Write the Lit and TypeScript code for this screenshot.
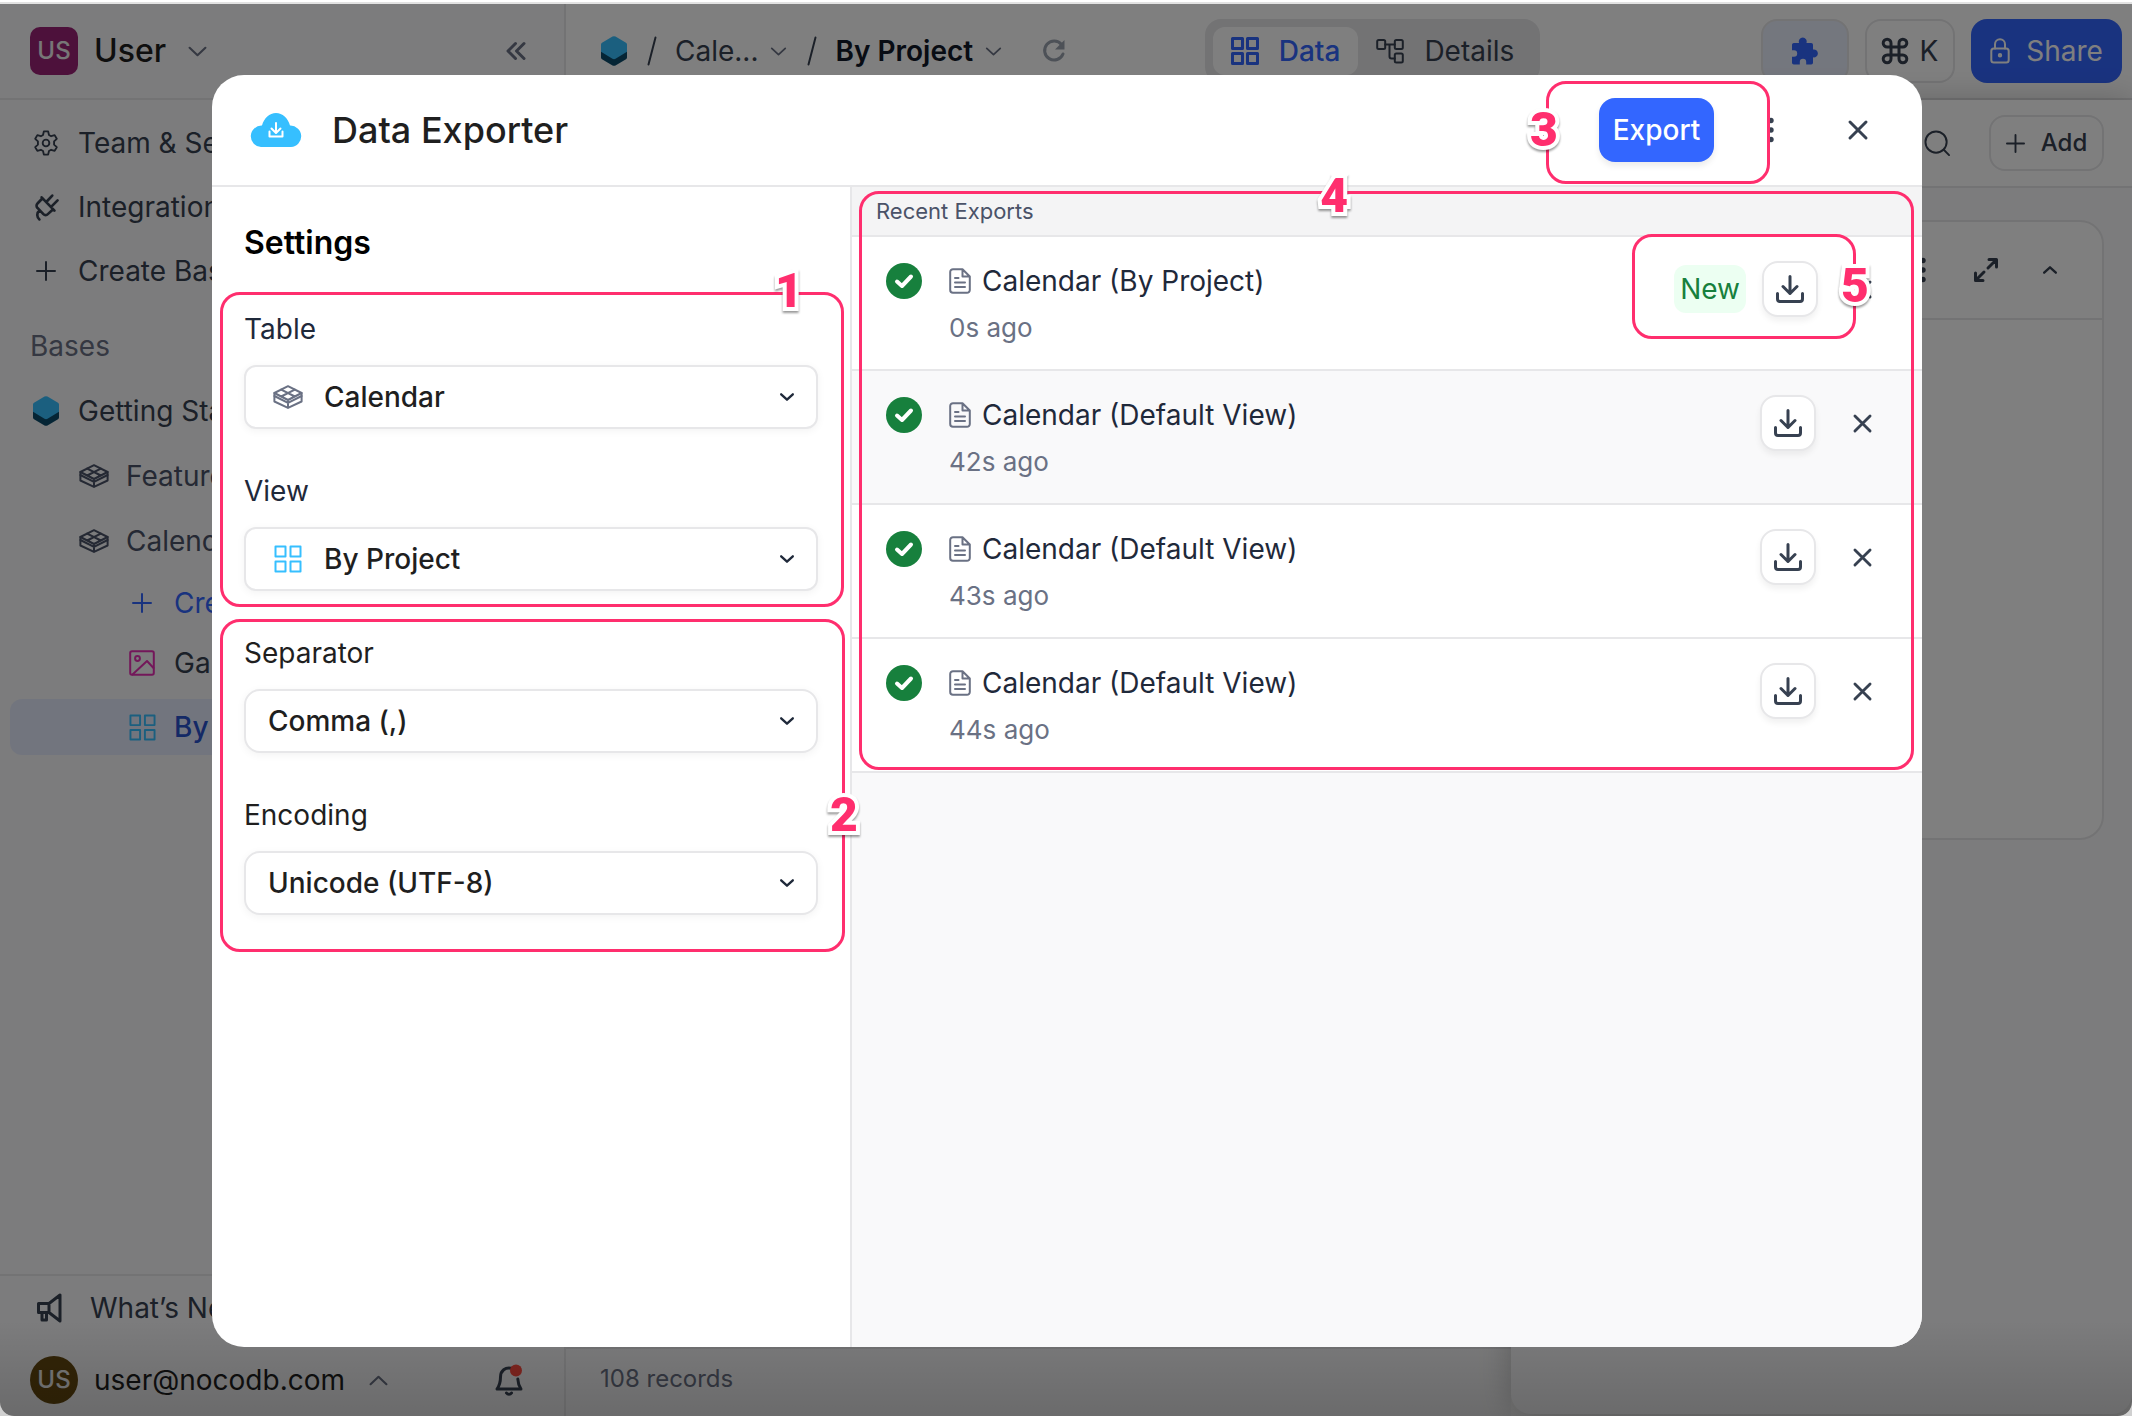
import { LitElement, html, css, svg, nothing, TemplateResult } from "lit";
import { customElement } from "lit/decorators.js";
import { classMap } from "lit/directives/class-map.js";

/* ---------- Icons: each entry is [viewBox width, viewBox height, drawing] ---------- */
const icons: Record<string, [number, number, TemplateResult]> = {
  chevronDown: [18, 10, svg`<path d="M1.5 1.5 9 8.5l7.5-7"/>`],
  chevronUp: [18, 10, svg`<path d="M1.5 8.5 9 1.5l7.5 7"/>`],
  collapse: [20, 18, svg`<path d="M9.5 1.5 2 9l7.5 7.5M18 1.5 10.5 9l7.5 7.5"/>`],
  plus: [20, 20, svg`<path d="M10 1v18M1 10h18"/>`],
  close: [18, 18, svg`<path d="M1 1l16 16M17 1 1 17"/>`],
  slash: [10, 30, svg`<path d="M8.5 1.5 1.5 28.5"/>`],
  search: [28, 28, svg`<circle cx="12.5" cy="12.5" r="11"/><path d="M20.5 20.5 26 26"/>`],
  gear: [28, 28, svg`<circle cx="14" cy="14" r="3.6"/><path d="M11.7 1.5h4.6l.9 3.9 2.3 1.3 3.8-1.2 2.3 4-2.900 2.700v3.600l2.900 2.700-2.300 4-3.800-1.200-2.300 1.300-.9 3.900h-4.600l-.9-3.900-2.300-1.300-3.800 1.200-2.300-4 2.900-2.700v-3.600L2.400 9.500l2.300-4 3.800 1.200 2.300-1.300z"/>`],
  plug: [26, 30, svg`<path d="M7.500 3.500 22 18.500M8.500 4.500 2.800 10.500a3.500 3.500 0 0 0 0 5l6.700 7a3.500 3.500 0 0 0 5 0l6-5.500M13 8.500 19.500 1.500M18.500 14l7-7M5 18.500C1.500 21 2 26 5 28.500"/>`],
  table: [30, 24, svg`<path d="M15 1.200 28.600 8v8.500L15 22.800 1.400 16.500V8z"/><path d="M1.400 8 15 15l13.600-7M8.200 4.600 21.800 11.500M21.800 4.600 8.200 11.500M15 15v7.500M1.400 11 15 17.800 28.600 11"/>`],
  gallery: [26, 26, svg`<rect x="1.2" y="1.2" width="23.6" height="23.6" rx="1.8"/><circle cx="8.5" cy="8.5" r="2.4"/><path d="M3.500 24.500 18 11l6.500 7"/>`],
  grid: [28, 28, svg`<path d="M1.500 1.500h10v10h-10zM16.500 1.500h10v10h-10zM1.500 16.500h10v10h-10zM16.500 16.500h10v10h-10z"/>`],
  details: [28, 26, svg`<rect x="1.2" y="2" width="8" height="9" rx="1.5"/><rect x="18.8" y="2" width="8" height="9" rx="1.5"/><rect x="18.8" y="15.5" width="8" height="9" rx="1.5"/><path d="M9.200 6.500h9.600M13.500 6.500v12a2 2 0 0 0 2 2h3.300"/>`],
  lock: [20, 26, svg`<rect x="1.3" y="10.5" width="17.4" height="14" rx="2.5"/><path d="M5 10.500V6.300a5 5 0 0 1 10 0v4.200"/><circle cx="10" cy="17.3" r="1.2"/>`],
  command: [26, 26, svg`<path d="M9 9V5.200A3.900 3.900 0 1 0 5.200 9h15.600A3.900 3.900 0 1 0 17 5.200v15.600a3.900 3.900 0 1 0 3.800-3.800H5.200A3.900 3.900 0 1 0 9 20.800z"/>`],
  expand: [24, 24, svg`<path d="M15 1.500h7.500V9M22 2l-8 8M9 22.500H1.500V15M2 22l8-8"/>`],
  megaphone: [26, 30, svg`<path d="M24 2v26L13 19.500H2.500v-9H13zM13 10.500v9M6 19.500V27h4.500v-7.500"/>`],
  download: [28, 28, svg`<path d="M14 1.500v17M7 11.500l7 7 7-7M1.500 18.500V24a2.500 2.500 0 0 0 2.500 2.500h20a2.500 2.500 0 0 0 2.500-2.500v-5.500"/>`],
  doc: [22, 26, svg`<path d="M13.500 1.200H4A2.800 2.800 0 0 0 1.200 4v18A2.800 2.800 0 0 0 4 24.800h14a2.800 2.800 0 0 0 2.800-2.800V8.500zM13.500 1.200v7.300h7.300M6 10h3.500M6 14.500h10M6 19h10"/>`],
  bell: [28, 32, svg`<path d="M17.500 4.500C10 2.500 5.500 7 5.500 13c0 6-1 8.500-3.500 12h24c-2-3-3-5.500-3.200-10M11.500 29c1.200 1.800 3.800 1.800 5 0"/><circle cx="21" cy="6.5" r="6" fill="#ff4a3f" stroke="none"/>`],
  reload: [24, 24, svg`<path d="M19.500 5.500A9.500 9.500 0 1 0 21 15"/><path d="M22.500 1v9.500H13z" fill="currentColor" stroke="none"/>`],
  dots: [6, 26, svg`<g fill="currentColor" stroke="none"><circle cx="3" cy="3.5" r="2.7"/><circle cx="3" cy="13" r="2.7"/><circle cx="3" cy="22.5" r="2.7"/></g>`],
  puzzle: [28, 28, svg`<path fill="currentColor" stroke="none" d="M1 7.500A1.800 1.800 0 0 1 2.800 6H8a4 4 0 1 1 7.500 0h4.700A1.800 1.800 0 0 1 22 7.800v4.700a4 4 0 1 1 0 7.800v5.400a1.800 1.800 0 0 1-1.800 1.800h-5V25a3.200 3.200 0 0 0-6.400 0v2.500h-6A1.800 1.800 0 0 1 1 25.700v-6h2a3.200 3.200 0 0 0 0-6.400H1z"/>`],
  hex: [26, 30, svg`<g stroke="none"><path fill="#0b4a6b" d="M0 14 13 8l13 6v7.500a2 2 0 0 1-1 1.700l-10.500 6.200a3 3 0 0 1-3 0L1 23.200a2 2 0 0 1-1-1.700z"/><path fill="#36bfff" d="M1 6.800 11.500.6a3 3 0 0 1 3 0L25 6.800a2 2 0 0 1 1 1.700v7.200l-11.500 7a3 3 0 0 1-3 0L0 15.700V8.500a2 2 0 0 1 1-1.700z"/></g>`],
  cloud: [52, 34, svg`<path fill="#36bfff" stroke="none" d="M11 34A10.700 10.700 0 0 1 12 12.600C14 5 19.500 0 26 0s12 5 14 12.600A10.700 10.700 0 0 1 41 34z"/><path stroke="#fff" stroke-width="2" d="M26 10v9.500M21.500 15.500 26 20l4.500-4.500M19.500 18.500v5h13v-5"/>`],
  check: [36, 36, svg`<circle cx="18" cy="18" r="18" fill="#17803d" stroke="none"/><path stroke="#fff" stroke-width="4" d="M11 18.500l5 4.500 9-9.500"/>`],
};

const icon = (name: string, width = icons[name][0], stroke = 2) => {
  const [w, h, body] = icons[name];
  return html`<svg class="icon" aria-hidden="true" viewBox="0 0 ${w} ${h}" width=${width} height=${Math.round((h * width) / w)}
    fill="none" stroke="currentColor" stroke-width=${stroke} stroke-linecap="round" stroke-linejoin="round">${body}</svg>`;
};

const base = css`
  :host { display: block; box-sizing: border-box; }
  *, *::before, *::after { box-sizing: border-box; }
  button, select { font: inherit; color: inherit; margin: 0; cursor: pointer; }
  button { display: inline-flex; align-items: center; justify-content: center; background: none; border: 0; padding: 0; white-space: nowrap; }
  a { color: inherit; text-decoration: none; }
  h1, h2, h3, p, ul { margin: 0; padding: 0; font-size: inherit; font-weight: inherit; }
  ul { list-style: none; }
  .icon { display: block; flex: none; overflow: visible; }
`;

/* ---------- Numbered call-out frame that lies over a region ---------- */
@customElement("call-out")
class CallOut extends LitElement {
  static properties = { n: { type: Number } };
  declare n: number;
  static styles = [base, css`
    :host { position: absolute; z-index: 5; pointer-events: none; border: 3px solid #ff2e6e; border-radius: 20px; }
    .number {
      position: absolute; width: 40px; text-align: center;
      font: 900 48px/48px Roboto, "Liberation Sans", sans-serif; color: #ff2e6e;
      -webkit-text-stroke: 8px #fff; paint-order: stroke fill; stroke-linejoin: round;
      filter: drop-shadow(0 2px 1px rgba(0, 0, 0, .4));
    }
    .n1 { right: 32px; top: -28px; }
    .n2 { right: -22px; top: 169px; }
    .n3 { left: -25px; top: 22px; }
    .n4 { left: calc(45% - 20px); top: -22px; }
    .n5 { right: -22px; top: 25px; }
  `];
  render() {
    return html`<span class="number n${this.n}">${this.n}</span>`;
  }
}

/* ---------- Left navigation ---------- */
@customElement("app-sidebar")
class AppSidebar extends LitElement {
  static styles = [base, css`
    :host { display: flex; flex-direction: column; background: #f9f9fa; border-right: 2px solid #e7e7e9; color: #374151; }
    .top { display: flex; align-items: center; height: 96px; padding: 0 38px 0 30px; border-bottom: 2px solid #e7e7e9; }
    .avatar { display: grid; place-items: center; width: 48px; height: 48px; border-radius: 10px; background: #9b2276; color: #eee; font-size: 24px; font-weight: 500; }
    .round { border-radius: 50%; background: #65480f; }
    .name { margin: 0 22px 0 16px; font-size: 32px; font-weight: 500; color: #1f1f1f; }
    .push { margin-left: auto; }
    .muted { color: #6a7184; }
    .row { display: flex; align-items: center; gap: 18px; height: 64px; padding-left: 32px; white-space: nowrap; }
    .glyph { display: flex; justify-content: center; width: 28px; }
    .links { padding-top: 11px; }
    .bases { padding: 0 0 0 30px; margin-top: 11px; line-height: 64px; color: #6a7184; }
    .tables { padding-top: 1px; }
    .table { height: 65px; padding-left: 80px; color: #4a5268; }
    .view { padding-left: 128px; height: 60px; }
    .create { color: #3366ff; }
    .pink { color: #e62fb4; }
    .sky { color: #36bfff; }
    .active { margin: 6px 8px 0 10px; padding-left: 118px; height: 56px; border-radius: 12px; background: #e5ebfc; color: #2952cc; font-weight: 500; }
    .bottom { margin-top: auto; border-top: 2px solid #e7e7e9; }
    .news { padding-left: 36px; gap: 28px; height: 64px; }
    .user { display: flex; align-items: center; height: 72px; margin-top: 4px; padding: 0 41px 0 30px; }
    .mail { margin: 0 24px 0 16px; color: #1f1f1f; }
  `];
  render() {
    const row = (cls: string, ic: TemplateResult, label: string) =>
      html`<li><a href="#" class="row ${cls}"><span class="glyph">${ic}</span>${label}</a></li>`;
    return html`
      <div class="top">
        <span class="avatar">US</span><span class="name">User</span>
        <span class="muted">${icon("chevronDown", 19, 2)}</span>
        <button class="push muted" aria-label="Collapse">${icon("collapse", 20, 3)}</button>
      </div>
      <ul class="links">
        ${row("", icon("gear", 26), "Team & Settings")}
        ${row("", icon("plug", 23, 3), "Integrations")}
        ${row("", icon("plus", 20), "Create Base")}
      </ul>
      <h2 class="bases">Bases</h2>
      <ul class="tables">
        ${row("", icon("hex", 26), "Getting Started")}
        ${row("table", icon("table", 30), "Features")}
        ${row("table", icon("table", 30), "Calendar")}
        ${row("view create", icon("plus", 20), "Create View")}
        ${row("view", html`<span class="pink">${icon("gallery", 26)}</span>`, "Gallery")}
        ${row("view active", html`<span class="sky">${icon("grid", 27)}</span>`, "By Project")}
      </ul>
      <div class="bottom">
        <a href="#" class="row news">${icon("megaphone", 26, 3)}What’s New</a>
        <div class="user">
          <span class="avatar round">US</span><span class="mail">user@nocodb.com</span>
          <span class="muted">${icon("chevronUp", 19, 2)}</span>
          <button class="push" aria-label="Notifications">${icon("bell", 28, 3)}</button>
        </div>
      </div>`;
  }
}

/* ---------- Main column behind the dialog ---------- */
@customElement("app-workspace")
class AppWorkspace extends LitElement {
  static styles = [base, css`
    :host { display: flex; flex-direction: column; min-width: 0; background: #fff; color: #374151; }
    .bar { display: flex; align-items: center; height: 96px; padding: 0 10px 0 35px; border-bottom: 2px solid #e7e7e9; }
    .crumbs, .actions { display: flex; align-items: center; flex: 1 1 0; white-space: nowrap; }
    .slash { margin: 0 18px 0 20px; }
    .down { margin-left: 12px; color: #6a7184; }
    .strong { color: #101828; font-weight: 600; }
    .reload { margin-left: 40px; color: #9aa2af; }
    .tabs { display: flex; margin-left: 22px; padding: 8px; border-radius: 16px; background: #e7e7e9; }
    .tab { gap: 20px; height: 48px; padding: 0 18px; border-radius: 12px; }
    .on { background: #fff; color: #3366ff; font-weight: 500; }
    .actions { justify-content: flex-end; gap: 16px; }
    .btn { height: 64px; border: 2px solid #e7e7e9; border-radius: 16px; }
    .ext { width: 88px; background: #e9eefc; color: #3366ff; }
    .keys { width: 90px; gap: 12px; }
    .share { width: 151px; gap: 16px; border: 0; background: #3366ff; color: #fff; }
    .body { display: flex; flex: 1; min-height: 0; }
    .records { flex: 1; display: flex; flex-direction: column; justify-content: flex-end; background: #f9f9fa; }
    .foot { height: 69px; padding: 0 34px; line-height: 60px; border-top: 2px solid #e7e7e9; font-size: 24px; color: #6a7184; }
    .panel { flex: 0 0 621px; margin-bottom: 2px; background: #f9f9fa; border-radius: 0 0 20px 20px; box-shadow: 0 0 32px rgba(0, 0, 0, .22); }
    .tools { display: flex; align-items: center; justify-content: flex-end; gap: 38px; height: 88px; padding-right: 28px; border-bottom: 2px solid #e7e7e9; background: #fff; }
    .add { width: 115px; height: 56px; gap: 16px; font-size: 24px; font-weight: 500; }
    .card { margin: 32px 28px; height: 620px; border: 2px solid #e7e7e9; border-radius: 24px; background: #fff; }
    .cardhead { display: flex; align-items: center; justify-content: flex-end; gap: 48px; height: 98px; padding-right: 45px; border-bottom: 2px solid #e7e7e9; }
    .tail { display: flex; align-items: center; gap: 45px; }
  `];
  render() {
    return html`
      <header class="bar">
        <nav class="crumbs">
          ${icon("hex", 26)}<span class="slash">${icon("slash")}</span>Cale...<span class="down">${icon("chevronDown", 17)}</span>
          <span class="slash">${icon("slash")}</span><span class="strong">By Project</span><span class="down">${icon("chevronDown", 17)}</span>
          <button class="reload" aria-label="Reload">${icon("reload", 24, 3)}</button>
        </nav>
        <div class="tabs">
          <button class="tab on">${icon("grid", 28, 3)}Data</button>
          <button class="tab">${icon("details", 28)}Details</button>
        </div>
        <div class="actions">
          <button class="btn ext" aria-label="Extensions">${icon("puzzle", 28)}</button>
          <button class="btn keys">${icon("command", 26, 3)}K</button>
          <button class="btn share">${icon("lock", 20)}Share</button>
        </div>
      </header>
      <div class="body">
        <section class="records"><footer class="foot">108 records</footer></section>
        <aside class="panel">
          <div class="tools">
            <button aria-label="Search">${icon("search", 27)}</button>
            <button class="btn add">${icon("plus", 19)}Add</button>
          </div>
          <div class="card">
            <div class="cardhead">${icon("dots", 6)}<div class="tail">${icon("expand", 24, 3)}${icon("chevronUp", 14, 3)}</div></div>
          </div>
        </aside>
      </div>`;
  }
}

/* ---------- Export dialog ---------- */
interface Field { id: string; label: string; value: string; glyph?: string; }
interface Job { view: string; age: string; fresh?: boolean; }

@customElement("export-dialog")
class ExportDialog extends LitElement {
  source: Field[] = [
    { id: "table", label: "Table", value: "Calendar", glyph: "table" },
    { id: "view", label: "View", value: "By Project", glyph: "grid" },
  ];
  format: Field[] = [
    { id: "separator", label: "Separator", value: "Comma (,)" },
    { id: "encoding", label: "Encoding", value: "Unicode (UTF-8)" },
  ];
  jobs: Job[] = [
    { view: "By Project", age: "0s ago", fresh: true },
    { view: "Default View", age: "42s ago" },
    { view: "Default View", age: "43s ago" },
    { view: "Default View", age: "44s ago" },
  ];
  static styles = [base, css`
    :host { display: flex; flex-direction: column; overflow: hidden; background: #fff; border-radius: 32px; color: #1f293a; }
    .head { display: flex; align-items: center; height: 112px; padding: 0 40px 0 38px; border-bottom: 2px solid #e7e7e9; }
    .title { flex: 1; margin-left: 30px; font-size: 36px; font-weight: 500; color: #1f1f1f; }
    .exporting { position: relative; margin-right: 54px; }
    .frame3 { inset: -17px -56px -22px -53px; }
    .export { width: 115px; height: 64px; border-radius: 16px; background: #3366ff; color: #fff; font-weight: 500; box-shadow: 0 4px 6px rgba(0, 0, 0, .08); }
    .x { width: 48px; height: 56px; color: #374151; }
    .more { color: #374151; margin-right: 60px; }
    .body { display: flex; flex: 1; min-height: 0; }
    .settings { flex: 0 0 640px; padding: 32px 32px 0; border-right: 2px solid #e7e7e9; display: flex; flex-direction: column; gap: 42px; }
    .heading { font-size: 32px; line-height: 48px; font-weight: 600; color: #000; }
    .group { position: relative; display: flex; flex-direction: column; gap: 42px; }
    .frame1 { inset: -17px -26px -16px -24px; }
    .frame2 { inset: -14px -27px -37px -24px; }
    .field { display: flex; flex-direction: column; gap: 16px; line-height: 40px; }
    .plain { color: #1f1f1f; }
    .box { display: grid; align-items: center; color: #1f1f1f; }
    .box > * { grid-area: 1 / 1; }
    .select { width: 100%; height: 64px; padding: 0 60px 0 22px; appearance: none; border: 2px solid #e7e7e9; border-radius: 16px; background: #fff; font-weight: 500; box-shadow: 0 2px 8px rgba(0, 0, 0, .05); }
    .led { padding-left: 78px; border-radius: 12px; }
    .lead { display: grid; justify-items: center; width: 32px; margin-left: 28px; pointer-events: none; color: #6a7184; }
    .sky { color: #36bfff; }
    .caret { justify-self: end; margin-right: 24px; pointer-events: none; color: #1f293a; }
    .recent { flex: 1; min-width: 0; background: #f9f9fa; }
    .list { position: relative; }
    .frame4 { inset: 4px 8px 3px 7px; }
    .caption { height: 50px; padding-left: 24px; line-height: 48px; font-size: 22px; color: #4a5268; background: #f4f4f5; border-bottom: 2px solid #e7e7e9; }
    .job { display: flex; align-items: flex-start; height: 134px; padding: 24px 32px 0 34px; background: #fff; border-bottom: 2px solid #e7e7e9; }
    .alt { background: #f9f9fa; }
    .state { padding-top: 2px; }
    .info { flex: 1; margin-left: 27px; }
    .name { display: flex; align-items: center; gap: 11px; line-height: 40px; }
    .doc { color: #6a7184; }
    .age { margin-top: 7px; line-height: 40px; font-size: 26px; color: #6a7184; }
    .ready { position: relative; display: flex; align-items: center; gap: 16px; margin-right: 18px; }
    .fresh { margin-right: 16px; }
    .frame5 { inset: -27px -38px -22px -42px; }
    .new { height: 48px; padding: 0 6px; line-height: 48px; border-radius: 12px; background: #ecfff2; color: #17803d; }
    .dl { width: 56px; height: 56px; border: 2px solid #e7e7e9; border-radius: 16px; background: #fff; color: #374151; box-shadow: 0 4px 6px rgba(0, 0, 0, .06); }
    .del { width: 56px; height: 56px; color: #374151; }
  `];
  private field(f: Field) {
    return html`<div class="field">
      <label class=${classMap({ plain: !f.glyph })} for=${f.id}>${f.label}</label>
      <div class="box">
        <select id=${f.id} class=${classMap({ select: true, led: !!f.glyph })}><option>${f.value}</option></select>
        ${f.glyph ? html`<span class=${classMap({ lead: true, sky: f.glyph === "grid" })}>${icon(f.glyph, f.glyph === "grid" ? 28 : 30)}</span>` : nothing}
        <span class="caret">${icon("chevronDown", 14, 3)}</span>
      </div>
    </div>`;
  }
  render() {
    return html`
      <header class="head">
        ${icon("cloud", 52)}
        <h1 class="title">Data Exporter</h1>
        <div class="exporting">
          <button class="export">Export</button>
          <call-out class="frame3" .n=${3}></call-out>
        </div>
        <button class="more" aria-label="More">${icon("dots", 6)}</button>
        <button class="x" aria-label="Close">${icon("close", 18, 3)}</button>
      </header>
      <div class="body">
        <section class="settings">
          <h2 class="heading">Settings</h2>
          <div class="group">${this.source.map((f) => this.field(f))}<call-out class="frame1" .n=${1}></call-out></div>
          <div class="group">${this.format.map((f) => this.field(f))}<call-out class="frame2" .n=${2}></call-out></div>
        </section>
        <section class="recent">
          <div class="list">
            <h2 class="caption">Recent Exports</h2>
            <ul>${this.jobs.map((j, i) => html`<li class=${classMap({ job: true, alt: i === 1 })}>
              <span class="state">${icon("check", 36)}</span>
              <div class="info">
                <h3 class="name"><span class="doc">${icon("doc", 22)}</span>Calendar (${j.view})</h3>
                <p class="age">${j.age}</p>
              </div>
              <div class=${classMap({ ready: true, fresh: !!j.fresh })}>
                ${j.fresh ? html`<span class="new">New</span>` : nothing}
                <button class="dl" aria-label="Download">${icon("download", 28, 3)}</button>
                ${j.fresh ? html`<call-out class="frame5" .n=${5}></call-out>` : nothing}
              </div>
              <button class="del" aria-label="Remove">${icon("close", 17, 3)}</button>
            </li>`)}</ul>
            <call-out class="frame4" .n=${4}></call-out>
          </div>
        </section>
      </div>`;
  }
}

@customElement("app-root")
class AppRoot extends LitElement {
  static styles = [base, css`
    :host { display: block; height: 100vh; overflow: hidden; background: #d0d0d0; font: 400 28px/40px Inter, "Open Sans", sans-serif; }
    .window { position: relative; display: grid; grid-template-columns: 566px minmax(0, 1fr); height: 100%; padding-top: 4px; overflow: hidden; border-radius: 0 0 14px 14px; background: linear-gradient(#fff 2px, #e2e2e2 2px 4px, #fff 4px); }
    .scrim { position: absolute; inset: 4px 0 0; z-index: 10; display: grid; padding: 71px 210px 69px 212px; background: linear-gradient(transparent calc(100% - 96px), rgba(0, 0, 0, .14)), rgba(0, 0, 0, .5); }
  `];
  render() {
    return html`<div class="window">
      <app-sidebar></app-sidebar>
      <app-workspace></app-workspace>
      <div class="scrim"><export-dialog role="dialog" aria-label="Data Exporter"></export-dialog></div>
    </div>`;
  }
}
